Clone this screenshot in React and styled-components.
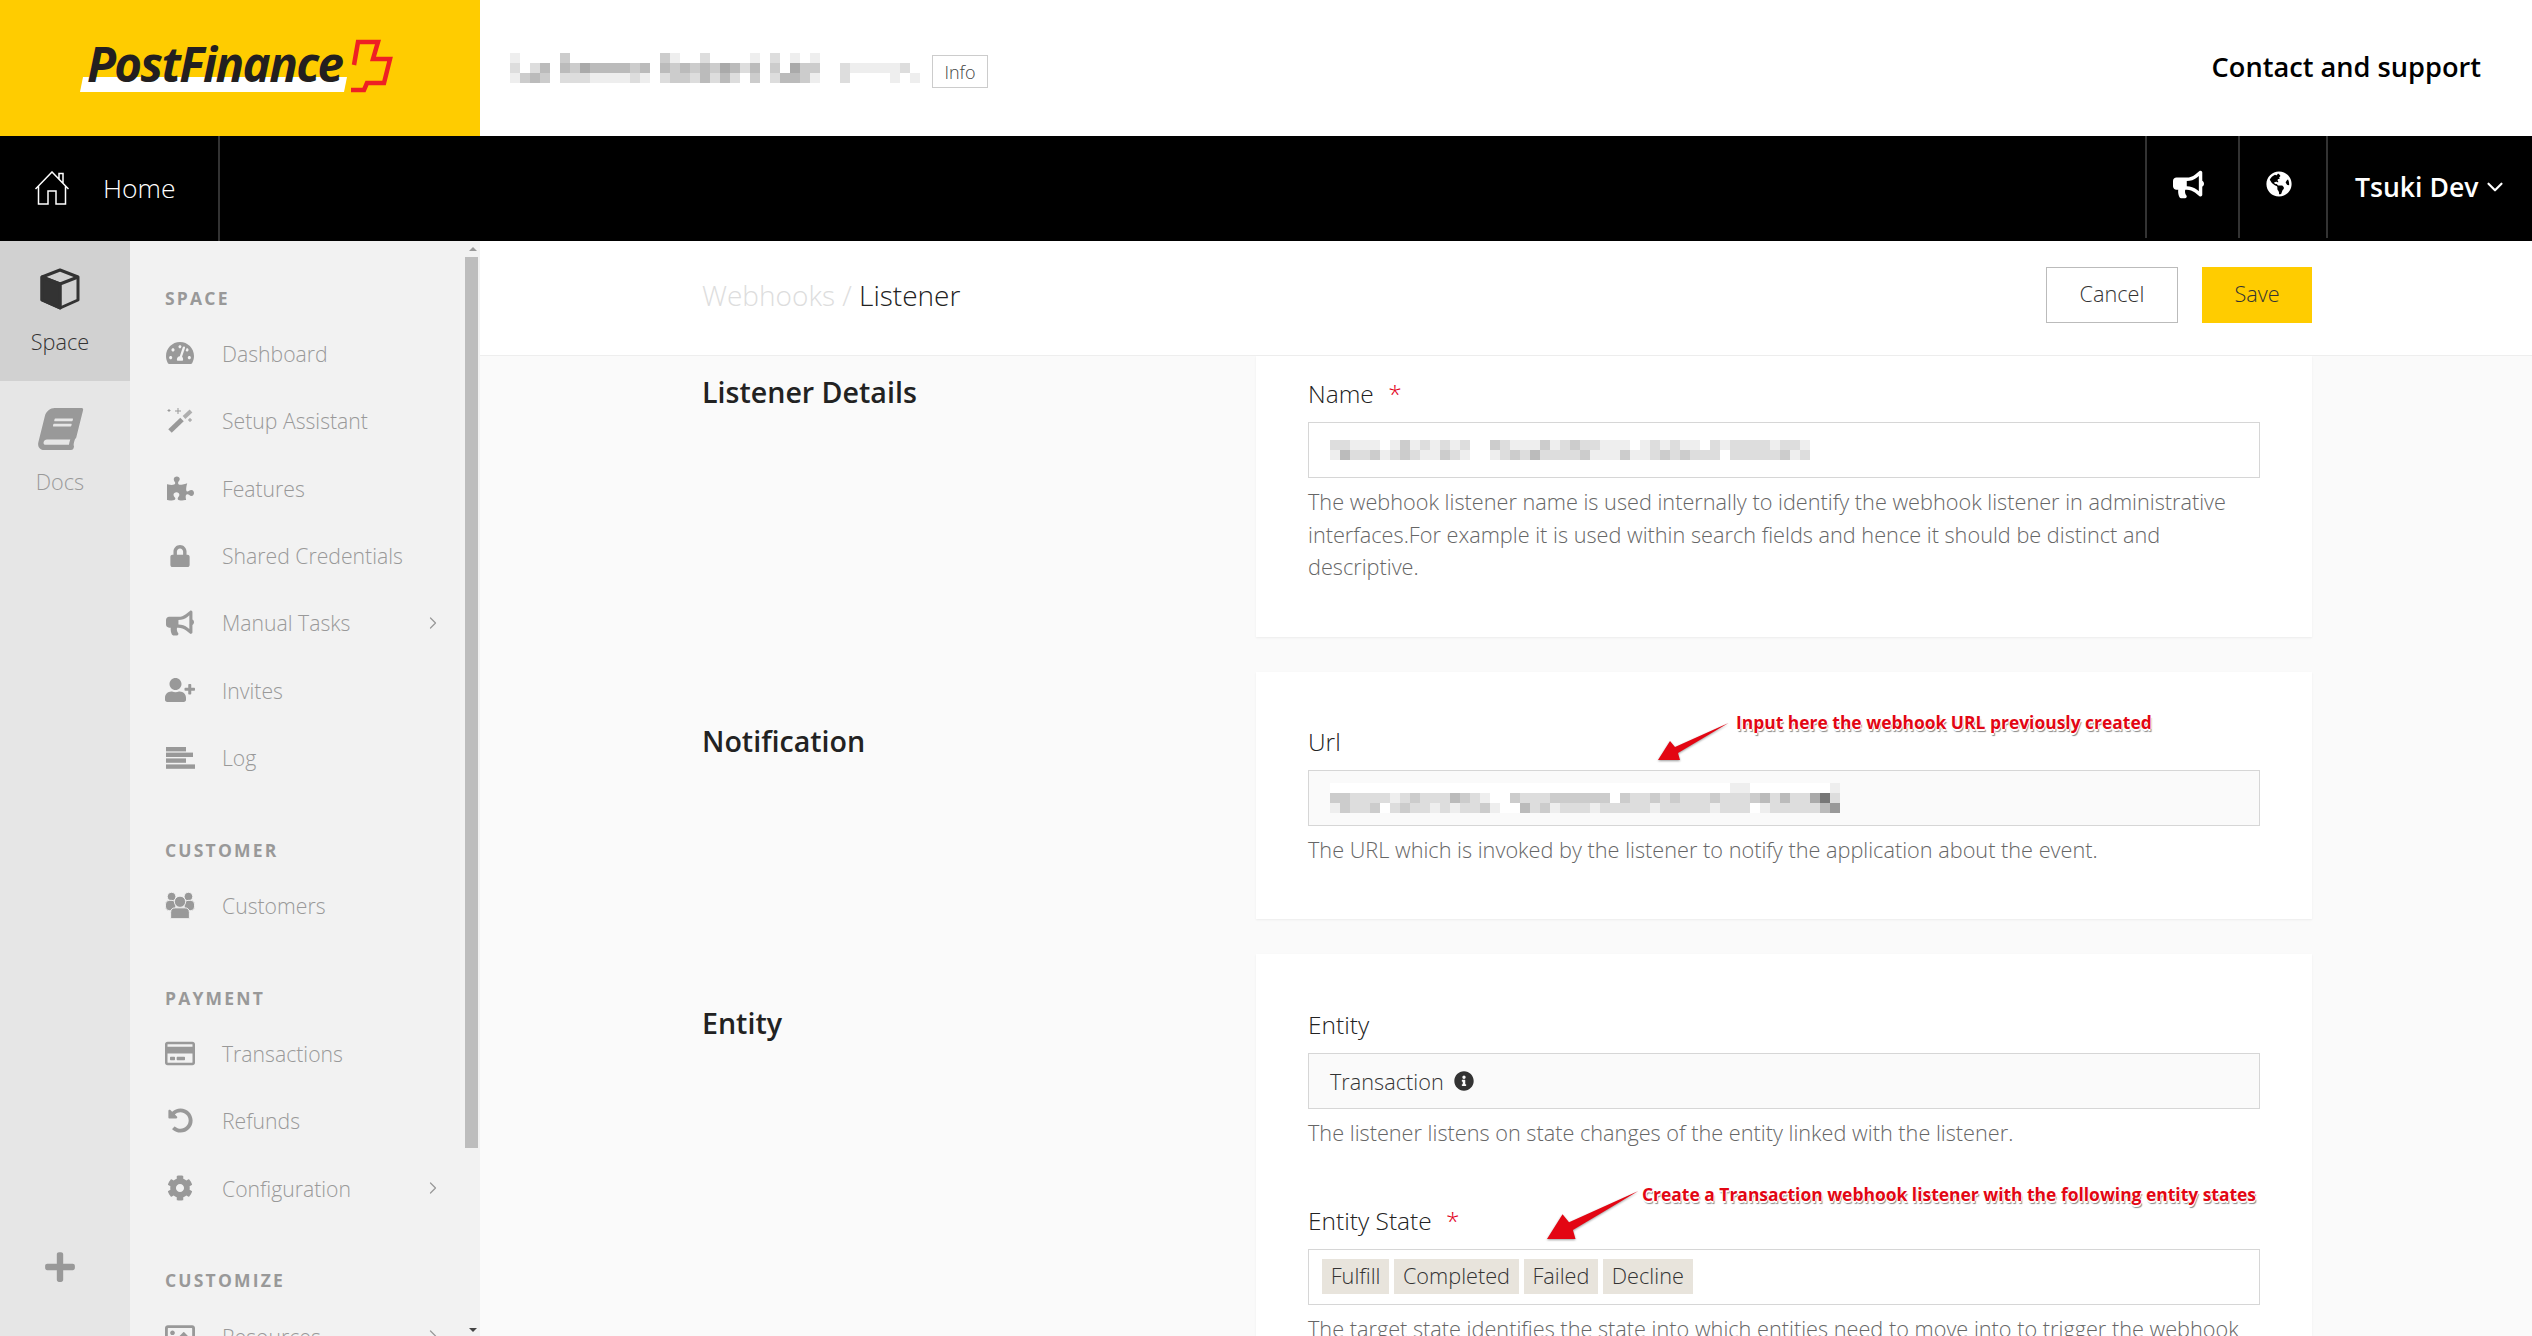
import styled, { createGlobalStyle } from 'styled-components'
import {
  FaTachometerAlt,
  FaPuzzlePiece,
  FaLock,
  FaBullhorn,
  FaUserPlus,
  FaRegCreditCard,
  FaUndoAlt,
  FaCog,
  FaRegImage,
  FaBook,
  FaPlus,
  FaGlobeAmericas,
  FaInfoCircle,
} from 'react-icons/fa'
import { ChevronRight, ChevronDown } from 'lucide-react'

const companyMosaic = [
  ['ef..', 'cf.......', 'ce..d....e', 'dfe.ef', '........'].join('.'),
  ['dfdb', 'bcabbbbcb', 'bcbcbcabdb', 'cfacc.', 'deeeeedf'].join('.'),
  ['ecbc', 'dddeeeede', 'dccdbdbdfc', 'dbbcef', 'dffffefe'].join('.'),
]
const nameMosaic = [
  'ddeee.ecededed.fcdeeecedcddeeefededee.deddddedde',
  'ebddcedcdeecdeffedcdbddddceeeceedcdcdddfdddddced',
]
const urlMosaic = [
  'ffffffffffffffffffffffffffffffffffffffffeeffffffffe',
  'ccddddedcdddbcdeffcdddccccccfcddcdcdddcdddcbdbdda7d',
  'ecddcfdcddededdceffbdcedddedddddedddddedddfedddddb9',
]

function WandIcon() {
  return (
    <svg width="27" height="27" viewBox="0 0 27 27" fill="currentColor" stroke="currentColor">
      <path d="M3 24 L15 12.5" strokeWidth="5" />
      <path d="M17 10.5 L24 4" strokeWidth="4" opacity="0.75" />
      <path d="M11 1 V7 M8 4 H14 M2 2 V5 M.5 3.5 H3.5 M23 11 V15 M21 13 H25" strokeWidth="1" />
    </svg>
  )
}

function LogIcon() {
  return (
    <svg width="29" height="22" viewBox="0 0 29 22" fill="currentColor">
      <rect width="20" height="4.4" />
      <rect y="5.6" width="27" height="4.4" />
      <rect y="11.4" width="20" height="4.4" />
      <rect y="17.4" width="29" height="4.4" />
    </svg>
  )
}

function CustomersIcon() {
  return (
    <svg width="32" height="29" viewBox="0 0 32 29" fill="currentColor" stroke="#f2f2f2" strokeWidth="1">
      <circle cx="7" cy="5" r="4.6" />
      <circle cx="25" cy="5" r="4.6" />
      <rect x="0.5" y="9" width="11" height="11" rx="4" />
      <rect x="20.5" y="9" width="11" height="11" rx="4" />
      <circle cx="16" cy="10.5" r="6" />
      <path d="M6 28.5 V22 Q6 17 11 17 H21 Q26 17 26 22 V28.5 Z" />
    </svg>
  )
}

const sections = [
  {
    title: 'Space',
    items: [
      { icon: FaTachometerAlt, size: 28, label: 'Dashboard' },
      { icon: WandIcon, label: 'Setup Assistant' },
      { icon: FaPuzzlePiece, size: 27, label: 'Features' },
      { icon: FaLock, size: 22, label: 'Shared Credentials' },
      { icon: FaBullhorn, size: 28, label: 'Manual Tasks', more: true },
      { icon: FaUserPlus, size: 32, label: 'Invites' },
      { icon: LogIcon, label: 'Log' },
    ],
  },
  { title: 'Customer', items: [{ icon: CustomersIcon, label: 'Customers' }] },
  {
    title: 'Payment',
    items: [
      { icon: FaRegCreditCard, size: 31, label: 'Transactions' },
      { icon: FaUndoAlt, size: 25, label: 'Refunds' },
      { icon: FaCog, size: 26, label: 'Configuration', more: true },
    ],
  },
  { title: 'Customize', items: [{ icon: FaRegImage, size: 31, label: 'Resources', more: true }] },
]

function Mosaic({ rows }) {
  const width = Math.max(...rows.map((r) => r.length)) * 10
  return (
    <MosaicSvg width={width} height={rows.length * 10} shapeRendering="crispEdges">
      {rows.map((row, y) =>
        row.split('').map((c, x) =>
          c === '.' ? null : (
            <rect key={`${x}-${y}`} x={x * 10} y={y * 10} width="10" height="10" fill={`#${c}${c}${c}`} />
          )
        )
      )}
    </MosaicSvg>
  )
}

function RedArrow({ width, height, left, top }) {
  return (
    <ArrowSvg viewBox="18 23 71 37" width={width} height={height} $left={left} $top={top}>
      <polygon points="88.5,23 35,47 30,41 18,60 40,60 38,53" fill="#e30613" />
    </ArrowSvg>
  )
}

export default function App() {
  return (
    <Page>
      <GlobalStyle />
      <TopBar>
        <LogoPanel>
          <Logo>
            <LogoBar />
            <LogoText>PostFinance</LogoText>
            <LogoCross viewBox="0 0 60 60" width="60" height="60">
              <path d="M7 28 L11 5 L31 5 L26 22 L43 22 L37 46 L20 46 L17 53 L4 53" fill="none" stroke="#ee2024" strokeWidth="4.5" />
            </LogoCross>
          </Logo>
        </LogoPanel>
        <CompanyInfo>
          <Mosaic rows={companyMosaic} />
          <InfoTag>Info</InfoTag>
        </CompanyInfo>
        <Support>Contact and support</Support>
      </TopBar>

      <NavBar>
        <HomeLink>
          <svg width="34" height="34" viewBox="0 0 34 34" fill="none" stroke="#fff" strokeWidth="1.5">
            <path d="M0.5 18 L17 1 L33.5 18 M3.5 15 V33 H13 V20 H21 V33 H30.5 V15 M24 8 V2.5 H28 V12" />
          </svg>
          Home
        </HomeLink>
        <NavSpacer />
        <NavIcon $width={93}>
          <FaBullhorn size={31} />
        </NavIcon>
        <NavIcon $width={88}>
          <FaGlobeAmericas size={26} />
        </NavIcon>
        <UserMenu>
          Tsuki Dev
          <ChevronDown size={26} strokeWidth={2} />
        </UserMenu>
      </NavBar>

      <Body>
        <Rail>
          <RailItem $active>
            <svg width="42" height="42" viewBox="0 0 42 42" fill="none" stroke="currentColor" strokeWidth="3" strokeLinejoin="round">
              <path d="M21 2 L39 9 V32 L21 40 L3 32 V9 Z" />
              <path d="M3 9 L21 16 L39 9 M21 16 V40" />
              <path d="M3 9 L21 16 V40 L3 32 Z" fill="currentColor" />
            </svg>
            Space
          </RailItem>
          <RailItem>
            <BookIcon size={40} />
            Docs
          </RailItem>
          <RailAdd>
            <FaPlus size={34} />
          </RailAdd>
        </Rail>

        <SidePanel>
          <SideNav>
            {sections.map((section) => (
              <SideSection key={section.title}>
                <SideHeading>{section.title}</SideHeading>
                {section.items.map(({ icon: Icon, size, label, more }) => (
                  <SideItem key={label}>
                    <SideIcon>
                      <Icon size={size} />
                    </SideIcon>
                    <SideLabel>{label}</SideLabel>
                    {more && <ChevronRight size={20} strokeWidth={1.5} />}
                  </SideItem>
                ))}
              </SideSection>
            ))}
          </SideNav>
          <ScrollTrack>
            <ScrollArrow />
            <ScrollThumb />
            <ScrollArrow $down />
          </ScrollTrack>
        </SidePanel>

        <Main>
          <PageHeader>
            <Breadcrumb>
              <span>Webhooks / </span>
              Listener
            </Breadcrumb>
            <HeaderActions>
              <CancelButton>Cancel</CancelButton>
              <SaveButton>Save</SaveButton>
            </HeaderActions>
          </PageHeader>

          <FormArea>
            <FormRow>
              <RowTitle $first>Listener Details</RowTitle>
              <Card $first>
                <Field>
                  <FieldLabel>
                    Name <Required>*</Required>
                  </FieldLabel>
                  <InputBox>
                    <Mosaic rows={nameMosaic} />
                  </InputBox>
                  <Help>
                    The webhook listener name is used internally to identify the webhook listener in administrative
                    interfaces.For example it is used within search fields and hence it should be distinct and
                    descriptive.
                  </Help>
                </Field>
              </Card>
            </FormRow>

            <FormRow>
              <RowTitle>Notification</RowTitle>
              <Card>
                <Field>
                  <FieldLabel>Url</FieldLabel>
                  <InputBox $readOnly>
                    <Mosaic rows={urlMosaic} />
                  </InputBox>
                  <Help>The URL which is invoked by the listener to notify the application about the event.</Help>
                </Field>
                <RedArrow width={71} height={37} left={402} top={51} />
                <Note $left={480} $top={36}>Input here the webhook URL previously created</Note>
              </Card>
            </FormRow>

            <FormRow>
              <RowTitle>Entity</RowTitle>
              <Card $roomy>
                <Field>
                  <FieldLabel>Entity</FieldLabel>
                  <InputBox $readOnly>
                    Transaction
                    <FaInfoCircle size={20} />
                  </InputBox>
                  <Help>The listener listens on state changes of the entity linked with the listener.</Help>
                </Field>
                <Field>
                  <FieldLabel>
                    Entity State <Required>*</Required>
                  </FieldLabel>
                  <ChipBox>
                    <Chip>Fulfill</Chip>
                    <Chip>Completed</Chip>
                    <Chip>Failed</Chip>
                    <Chip>Decline</Chip>
                  </ChipBox>
                  <Help>
                    The target state identifies the state into which entities need to move into to trigger the webhook
                    listener.
                  </Help>
                </Field>
                <RedArrow width={92} height={48} left={291} top={237} />
                <Note $left={386} $top={226}>Create a Transaction webhook listener with the following entity states</Note>
              </Card>
            </FormRow>
          </FormArea>
        </Main>
      </Body>
    </Page>
  )
}

const GlobalStyle = createGlobalStyle`
  html, body {
    margin: 0;
    padding: 0;
    height: 100%;
    overflow: hidden;
  }
  body {
    font-family: 'Open Sans', 'Noto Sans', sans-serif;
    font-weight: 300;
    font-size: 21.7px;
    color: #333;
    background: #fafafa;
  }
`
const Page = styled.div`
  display: flex;
  flex-direction: column;
  height: 100vh;
  overflow: hidden;
`
const TopBar = styled.header`
  display: flex;
  align-items: center;
  height: 136px;
  flex-shrink: 0;
  background: #fff;
`
const LogoPanel = styled.div`
  display: flex;
  align-items: center;
  width: 480px;
  height: 100%;
  padding-left: 80px;
  box-sizing: border-box;
  background: #ffcc00;
`
const Logo = styled.div`
  position: relative;
  width: 316px;
  height: 60px;
`
const LogoBar = styled.div`
  position: absolute;
  left: 0;
  top: 39px;
  width: 267px;
  height: 15px;
  background: #fff;
  clip-path: polygon(3px 0, 100% 0, 264px 100%, 0 100%);
`
const LogoText = styled.span`
  position: absolute;
  left: 7px;
  top: -5px;
  font-size: 47.5px;
  line-height: 62px;
  font-weight: 700;
  font-style: italic;
  letter-spacing: -1.6px;
  color: #231f20;
`
const LogoCross = styled.svg`
  position: absolute;
  left: 267px;
  top: -1px;
`
const CompanyInfo = styled.div`
  display: flex;
  align-items: center;
  margin-left: 30px;
  gap: 12px;
`
const MosaicSvg = styled.svg`
  display: block;
  flex-shrink: 0;
`
const InfoTag = styled.span`
  display: flex;
  align-items: center;
  justify-content: center;
  width: 56px;
  height: 33px;
  margin-top: 7px;
  box-sizing: border-box;
  border: 1px solid #ccc;
  font-size: 18px;
  color: #444;
`
const Support = styled.a`
  margin-left: auto;
  margin-right: 51px;
  margin-top: -4px;
  font-size: 27.2px;
  font-weight: 600;
  color: #000;
`
const NavBar = styled.nav`
  display: flex;
  align-items: stretch;
  height: 105px;
  flex-shrink: 0;
  background: #000;
  color: #fff;
`
const HomeLink = styled.a`
  display: flex;
  align-items: center;
  gap: 34px;
  width: 220px;
  padding: 0 0 2px 35px;
  box-sizing: border-box;
  border-right: 2px solid #333;
  font-size: 26.5px;
  font-weight: 300;
`
const NavSpacer = styled.div`
  flex: 1;
`
const NavIcon = styled.a`
  display: flex;
  align-items: center;
  justify-content: center;
  width: ${({ $width }) => $width}px;
  box-sizing: border-box;
  margin-bottom: 3px;
  padding: 0 8px 6px 0;
  border-left: 2px solid #333;
`
const UserMenu = styled.a`
  display: flex;
  align-items: center;
  gap: 4px;
  width: 206px;
  padding-left: 27px;
  box-sizing: border-box;
  margin-bottom: 3px;
  border-left: 2px solid #333;
  font-size: 26.6px;
  font-weight: 600;
`
const Body = styled.div`
  display: flex;
  flex: 1;
  min-height: 0;
`
const Rail = styled.aside`
  display: flex;
  flex-direction: column;
  width: 130px;
  flex-shrink: 0;
  background: #e6e6e6;
`
const RailItem = styled.a`
  display: flex;
  flex-direction: column;
  align-items: center;
  gap: 17px;
  height: 140px;
  padding: 27px 10px 0 0;
  box-sizing: border-box;
  background: ${({ $active }) => ($active ? '#d1d1d1' : 'transparent')};
  color: ${({ $active }) => ($active ? '#333' : '#999')};
`
const BookIcon = styled(FaBook)`
  height: 42px;
  transform: skewX(-14deg);
`
const RailAdd = styled.a`
  display: flex;
  justify-content: center;
  margin-top: auto;
  padding: 0 10px 52px 0;
  color: #999;
`
const SidePanel = styled.aside`
  display: flex;
  width: 350px;
  flex-shrink: 0;
  background: #f2f2f2;
  overflow: hidden;
`
const SideNav = styled.div`
  flex: 1;
  min-width: 0;
  padding: 35.5px 0 0 35px;
  overflow: hidden;
`
const SideSection = styled.section`
  padding-bottom: 37.4px;
`
const SideHeading = styled.h4`
  margin: 0;
  height: 43px;
  line-height: 43px;
  font-size: 17.5px;
  font-weight: 700;
  letter-spacing: 2.2px;
  text-transform: uppercase;
  color: #999;
`
const SideItem = styled.a`
  display: flex;
  align-items: center;
  height: 67.45px;
  padding-right: 22px;
  font-size: 21.2px;
  color: #999;
`
const SideIcon = styled.span`
  display: flex;
  justify-content: center;
  width: 30px;
  margin-right: 27px;
`
const SideLabel = styled.span`
  flex: 1;
`
const ScrollTrack = styled.div`
  display: flex;
  flex-direction: column;
  align-items: flex-start;
  width: 15px;
`
const ScrollArrow = styled.div`
  width: 0;
  height: 0;
  margin: ${({ $down }) => ($down ? 'auto 0 4px 4px' : '6px 0 6px 4px')};
  border-left: 4px solid transparent;
  border-right: 4px solid transparent;
  ${({ $down }) => ($down ? 'border-top: 4px solid #444;' : 'border-bottom: 4px solid #999;')}
`
const ScrollThumb = styled.div`
  width: 13px;
  height: 891px;
  background: #bdbdbd;
`
const Main = styled.main`
  display: flex;
  flex-direction: column;
  flex: 1;
  min-width: 0;
  background: #fafafa;
  overflow: hidden;
`
const PageHeader = styled.div`
  display: flex;
  align-items: flex-start;
  justify-content: space-between;
  height: 115px;
  flex-shrink: 0;
  padding: 26px 220px 0 222px;
  box-sizing: border-box;
  background: #fff;
  border-bottom: 1px solid #eee;
`
const Breadcrumb = styled.div`
  font-size: 28px;
  line-height: 56px;
  color: #222;
  font-weight: 300;
  span {
    color: #ddd;
  }
`
const HeaderActions = styled.div`
  display: flex;
  gap: 24px;
`
const CancelButton = styled.button`
  width: 132px;
  height: 56px;
  padding: 0 0 3px;
  border: 1px solid #bbb;
  background: #fff;
  font: inherit;
  color: #333;
`
const SaveButton = styled.button`
  width: 110px;
  height: 56px;
  padding: 0 0 3px;
  border: none;
  background: #ffcc00;
  font: inherit;
  color: #333;
`
const FormArea = styled.div`
  display: flex;
  flex-direction: column;
  gap: 35px;
  padding: 0 220px 0 222px;
`
const FormRow = styled.section`
  display: flex;
  align-items: flex-start;
`
const RowTitle = styled.h2`
  width: 554px;
  flex-shrink: 0;
  margin: ${({ $first }) => ($first ? '18px' : '51px')} 0 0;
  font-size: 28.6px;
  line-height: 36px;
  font-weight: 600;
  color: #222;
`
const Card = styled.div`
  position: relative;
  flex: 1;
  display: flex;
  flex-direction: column;
  gap: 53px;
  padding: ${({ $first, $roomy }) => ($first ? '20px' : $roomy ? '53px' : '52px')} 52px 53px;
  background: #fff;
  box-shadow: 0 1px 2px rgba(0, 0, 0, 0.06);
`
const Field = styled.div`
  display: flex;
  flex-direction: column;
`
const FieldLabel = styled.label`
  height: 36px;
  margin-bottom: 10px;
  font-size: 24.5px;
  line-height: 36px;
  font-weight: 300;
  color: #222;
`
const Required = styled.span`
  margin-left: 8px;
  color: #e2001a;
`
const InputBox = styled.div`
  display: flex;
  align-items: center;
  gap: 10px;
  height: 56px;
  padding: 0 21px;
  box-sizing: border-box;
  border: 1px solid #d6d6d6;
  background: ${({ $readOnly }) => ($readOnly ? '#fafafa' : '#fff')};
`
const ChipBox = styled.div`
  display: flex;
  align-items: center;
  gap: 5px;
  height: 56px;
  padding: 0 13px;
  box-sizing: border-box;
  border: 1px solid #d6d6d6;
`
const Chip = styled.span`
  height: 35px;
  padding: 0 8.7px;
  line-height: 34px;
  background: #e8e4dc;
`
const Help = styled.p`
  margin: 8px 0 0;
  line-height: 32.5px;
  color: #666;
`
const Note = styled.span`
  position: absolute;
  left: ${({ $left }) => $left}px;
  top: ${({ $top }) => $top}px;
  font-size: 17.45px;
  line-height: 28px;
  font-weight: 700;
  white-space: nowrap;
  color: #e30613;
  text-shadow: -1px 0 0 #fff, 1px 0 0 #fff, 0 2px 0 #fff, 1px 3px 1px #888;
`
const ArrowSvg = styled.svg`
  position: absolute;
  left: ${({ $left }) => $left}px;
  top: ${({ $top }) => $top}px;
  filter: drop-shadow(0 1px 1px rgba(0, 0, 0, 0.4));
`
